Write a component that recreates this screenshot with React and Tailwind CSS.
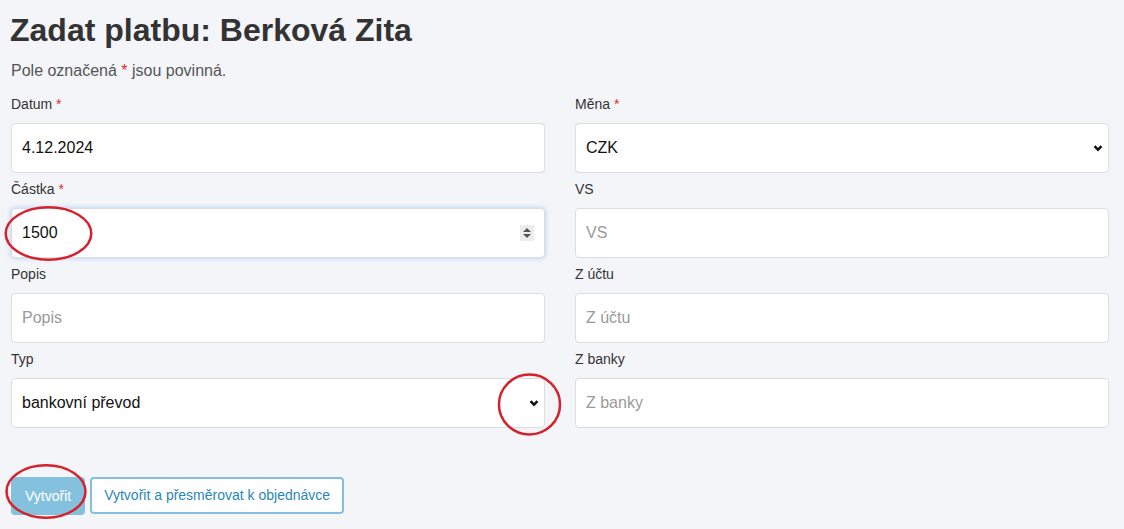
import React from 'react'

function Label({ children, required }) {
  return (
    <label className="block h-[18px] mb-[10px] text-[14px] leading-[18px] text-[#333]">
      {children}
      {required && <span className="text-[#d9302c]"> *</span>}
    </label>
  )
}

function Chevron() {
  return (
    <svg
      className="absolute right-[5px] top-1/2 -translate-y-1/2 pointer-events-none"
      width="12"
      height="12"
      viewBox="0 0 12 12"
    >
      <path d="M2.5 4.2 L6 7.7 L9.5 4.2" fill="none" stroke="#111" strokeWidth="2.4" />
    </svg>
  )
}

const inputCls =
  'w-full h-[50px] px-[10px] bg-white border border-[#dcdde0] rounded-[4px] text-[16px] text-[#111] placeholder:text-[#9a9a9a] outline-none'

function Field({ label, required, value, placeholder }) {
  return (
    <div>
      <Label required={required}>{label}</Label>
      <input readOnly className={inputCls} value={value} placeholder={placeholder} />
    </div>
  )
}

function SelectField({ label, required, value }) {
  return (
    <div>
      <Label required={required}>{label}</Label>
      <div className="relative">
        <select
          className={`${inputCls} appearance-none`}
          value={value}
          onChange={() => {}}
        >
          <option>{value}</option>
        </select>
        <Chevron />
      </div>
    </div>
  )
}

function Ellipse({ className }) {
  return (
    <svg className={`absolute pointer-events-none ${className}`} viewBox="0 0 100 100" preserveAspectRatio="none">
      <ellipse
        cx="50"
        cy="50"
        rx="47"
        ry="46"
        fill="none"
        stroke="#d4212b"
        strokeWidth="2.5"
        vectorEffect="non-scaling-stroke"
      />
    </svg>
  )
}

export default function App() {
  return (
    <div
      className="relative min-h-[529px] bg-[#f4f5f9] pl-[11px] pr-[15px] pt-[12px]"
      style={{ fontFamily: '"Liberation Sans", Arial, sans-serif' }}
    >
      <h1 className="text-[32px] leading-[36px] font-bold text-[#333] -ml-[1px]">
        Zadat platbu: Berková Zita
      </h1>
      <p className="mt-[13px] text-[16px] leading-[20px] text-[#555]">
        Pole označená <span className="text-[#d9302c]">*</span> jsou povinná.
      </p>

      <div className="mt-[14px] grid grid-cols-2 gap-x-[30px] gap-y-[7px]">
        <Field label="Datum" required value="4.12.2024" />
        <SelectField label="Měna" required value="CZK" />

        <div>
          <Label required>Částka</Label>
          <div className="relative">
            <input
              readOnly
              className={`${inputCls} border-[#8fc3ea] shadow-[0_0_5px_rgba(102,175,233,0.55)]`}
              value="1500"
            />
            <div className="absolute right-[11px] top-1/2 -translate-y-1/2 w-[14px] h-[16px] bg-[#ececec] flex flex-col items-center justify-center gap-[2px]">
              <span className="w-0 h-0 border-l-[4px] border-r-[4px] border-b-[4px] border-l-transparent border-r-transparent border-b-[#555]" />
              <span className="w-0 h-0 border-l-[4px] border-r-[4px] border-t-[4px] border-l-transparent border-r-transparent border-t-[#555]" />
            </div>
          </div>
        </div>
        <Field label="VS" placeholder="VS" />

        <Field label="Popis" placeholder="Popis" />
        <Field label="Z účtu" placeholder="Z účtu" />

        <SelectField label="Typ" value="bankovní převod" />
        <Field label="Z banky" placeholder="Z banky" />
      </div>

      <div className="mt-[49px] flex gap-[5px]">
        <button className="h-[38px] px-[14px] rounded-[4px] bg-[#84c1df] text-white text-[14px]">
          Vytvořit
        </button>
        <button className="h-[37px] px-[12px] rounded-[4px] bg-white border-2 border-[#86bfdb] text-[#2a86b7] text-[14px]">
          Vytvořit a přesměrovat k objednávce
        </button>
      </div>

      <Ellipse className="left-[3px] top-[205px] w-[91px] h-[57px]" />
      <Ellipse className="left-[497px] top-[372px] w-[65px] h-[65px]" />
      <Ellipse className="left-[4px] top-[463px] w-[84px] h-[57px]" />
    </div>
  )
}
